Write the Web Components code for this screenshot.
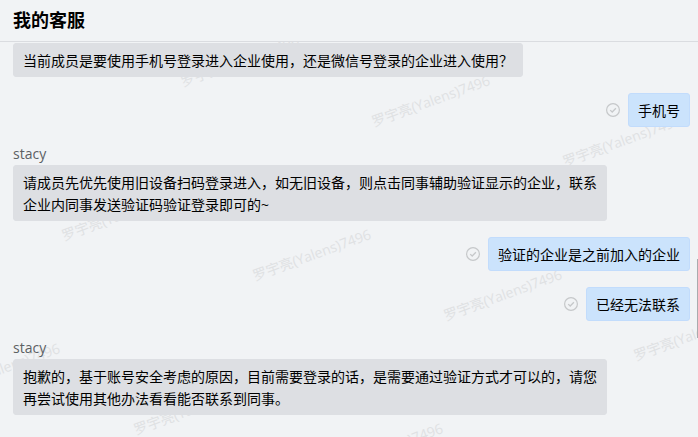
<!DOCTYPE html>
<html lang="zh-CN">
<head>
<meta charset="utf-8">
<meta name="viewport" content="width=device-width, initial-scale=1">
<title>我的客服</title>
<style>
  html, body {
    height: 100%;
    margin: 0;
  }
  body {
    font-family: "Open Sans", "Noto Sans CJK SC", sans-serif;
    font-size: 14px;
    line-height: 22px;
    color: #000;
    background: #f1f3f5;
  }
</style>
</head>
<body>
<chat-window heading="我的客服" watermark="罗宇亮(Yalens)7496">
  <chat-message>当前成员是要使用手机号登录进入企业使用，还是微信号登录的企业进入使用？</chat-message>
  <chat-message own>手机号</chat-message>
  <chat-message sender="stacy">请成员先优先使用旧设备扫码登录进入，如无旧设备，则点击同事辅助验证显示的企业，联系企业内同事发送验证码验证登录即可的~</chat-message>
  <chat-message own>验证的企业是之前加入的企业</chat-message>
  <chat-message own>已经无法联系</chat-message>
  <chat-message sender="stacy">抱歉的，基于账号安全考虑的原因，目前需要登录的话，是需要通过验证方式才可以的，请您再尝试使用其他办法看看能否联系到同事。</chat-message>
</chat-window>

<script>
class ReadMark extends HTMLElement {
  constructor() {
    super();
    this.attachShadow({ mode: "open" });
  }

  connectedCallback() {
    this.shadowRoot.innerHTML = `
      <style>
        :host {
          display: block;
          flex: none;
          width: 14px;
          height: 14px;
          color: #c6c8ca;
        }
        svg {
          display: block;
        }
      </style>
      <svg width="14" height="14" viewBox="0 0 14 14" fill="none" stroke="currentColor" role="img" aria-label="已读">
        <circle cx="7" cy="7" r="6.4" stroke-width="1.2"/>
        <path d="M4.2 7.1l2 1.9 3.7-3.8" stroke-width="1.3"/>
      </svg>
    `;
  }
}

class ChatMessage extends HTMLElement {
  constructor() {
    super();
    this.attachShadow({ mode: "open" });
  }

  connectedCallback() {
    const own = this.hasAttribute("own");
    const sender = this.getAttribute("sender");
    this.shadowRoot.innerHTML = `
      <style>
        :host {
          display: block;
        }
        .sender {
          color: #5c5f63;
        }
        .row {
          display: flex;
          align-items: center;
          gap: 8px;
        }
        .bubble {
          box-sizing: border-box;
          max-width: 594px;
          padding: 6px 9px 4px;
          border: 1px solid #dddfe3;
          border-radius: 3px;
          background: #dddfe3;
        }
        :host([own]) .row {
          justify-content: flex-end;
        }
        :host([own]) .bubble {
          border-color: #c2dcfc;
          background: #cbe3fc;
        }
      </style>
      ${sender ? `<div class="sender">${sender}</div>` : ""}
      <div class="row">
        ${own ? "<read-mark></read-mark>" : ""}
        <div class="bubble"><slot></slot></div>
      </div>
    `;
  }
}

// Slanted text repeated on a skewed grid behind the messages
class WaterMark extends HTMLElement {
  constructor() {
    super();
    this.attachShadow({ mode: "open" });
  }

  connectedCallback() {
    const text = this.getAttribute("text");
    const spots = [
      [183, 45], [374, 85], [565, 125],
      [64, 199], [255, 239], [446, 279], [636, 319],
      [-56, 353], [136, 393], [327, 433],
    ];
    this.shadowRoot.innerHTML = `
      <style>
        :host {
          display: block;
          position: absolute;
          inset: 0;
          overflow: hidden;
          pointer-events: none;
        }
        svg {
          display: block;
          width: 100%;
          height: 100%;
        }
        text {
          font-size: 14px;
          fill: #dfe1e3;
        }
      </style>
      <svg aria-hidden="true">
        ${spots.map(([x, y]) =>
          `<text transform="translate(${x} ${y}) rotate(-20)">${text}</text>`
        ).join("")}
      </svg>
    `;
  }
}

class ChatWindow extends HTMLElement {
  constructor() {
    super();
    this.attachShadow({ mode: "open" });
  }

  connectedCallback() {
    this.shadowRoot.innerHTML = `
      <style>
        :host {
          display: flex;
          flex-direction: column;
          height: 100%;
          overflow: hidden;
        }
        header {
          flex: none;
          padding: 8px 13px 9px;
          border-bottom: 1px solid #dadce0;
        }
        h1 {
          margin: 0;
          font-size: 18px;
          line-height: 24px;
          font-weight: 700;
        }
        main {
          position: relative;
          flex: 1;
          min-height: 0;
          overflow: hidden;
        }
        .messages {
          position: relative;
          display: flex;
          flex-direction: column;
          gap: 16px;
          padding: 1px 8px 22px 13px;
        }
        .thumb {
          position: absolute;
          top: 55%;
          right: 0;
          width: 1px;
          height: 20%;
          background: #a9abae;
        }
      </style>
      <header><h1>${this.getAttribute("heading")}</h1></header>
      <main>
        <water-mark text="${this.getAttribute("watermark")}"></water-mark>
        <div class="messages"><slot></slot></div>
        <div class="thumb"></div>
      </main>
    `;
  }
}

customElements.define("read-mark", ReadMark);
customElements.define("chat-message", ChatMessage);
customElements.define("water-mark", WaterMark);
customElements.define("chat-window", ChatWindow);
</script>
</body>
</html>
